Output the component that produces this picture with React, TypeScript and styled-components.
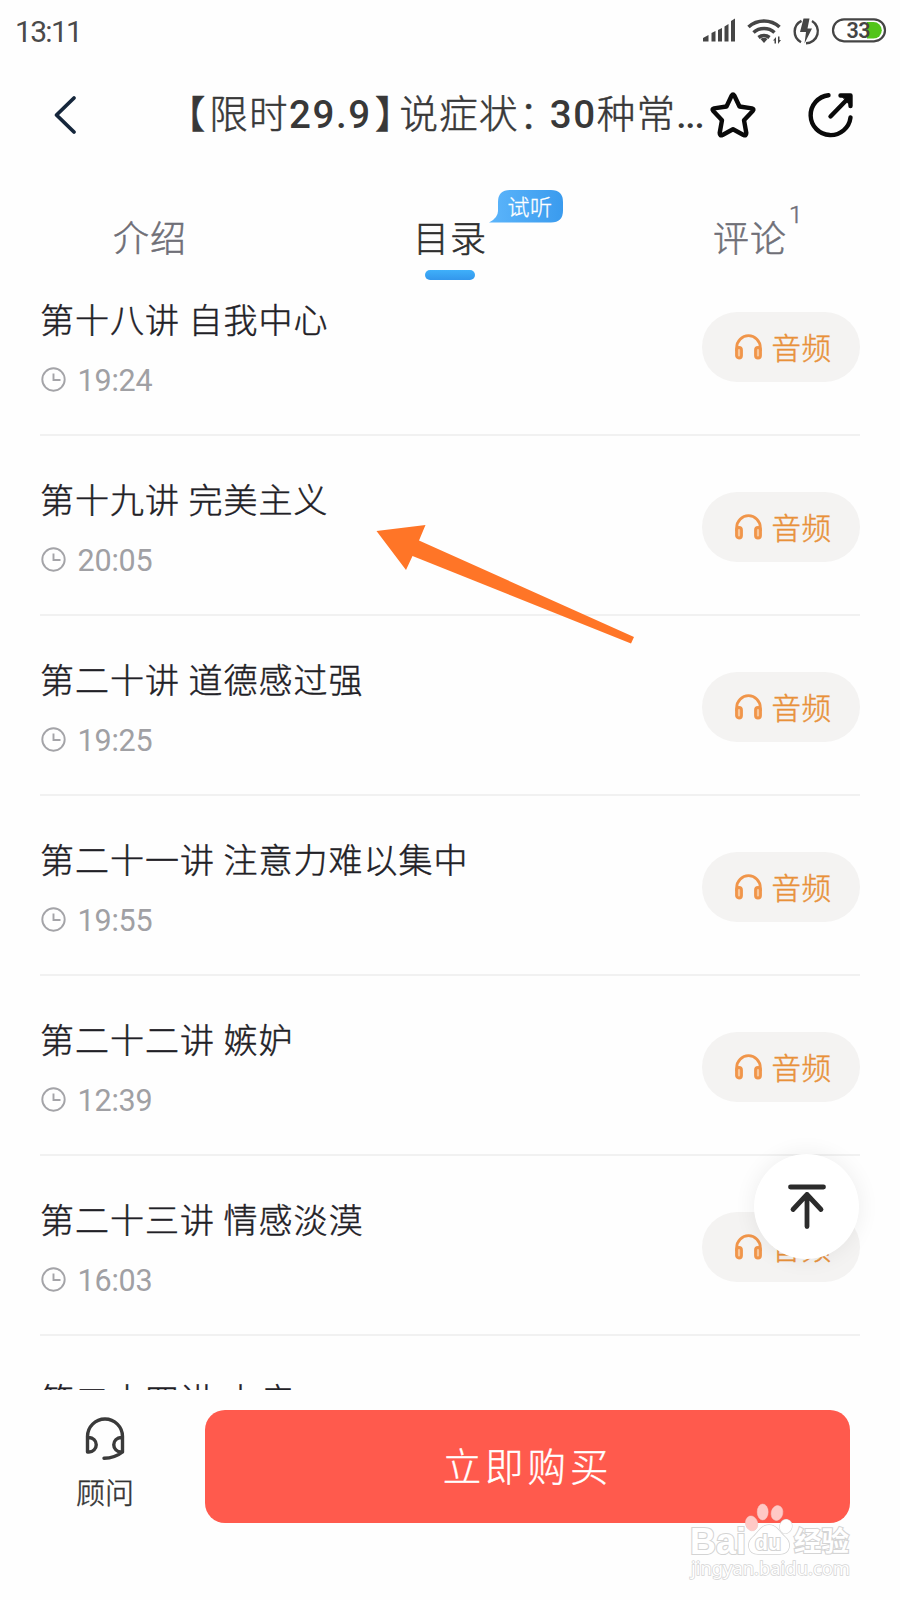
import React from 'react';
import styled, { createGlobalStyle } from 'styled-components';

const cjk = `'Noto Sans CJK SC', sans-serif`;

const GlobalStyle = createGlobalStyle`
  * { box-sizing: border-box; }
  body { margin: 0; background: #fefefe; font-family: Roboto, ${cjk}; }
  svg { display: block; flex: none; }
`;

const Page = styled.div`
  position: relative;
  width: 900px;
  height: 1600px;
  overflow: hidden;
  display: flex;
  flex-direction: column;
  background: #fefefe;
`;

const StatusBar = styled.div`
  height: 60px;
  padding: 1px 13px 0 15px;
  display: flex;
  align-items: center;
  justify-content: space-between;
`;

const Clock = styled.span`
  padding-top: 2px;
  font: 400 30px/1 Roboto, sans-serif;
  letter-spacing: -1.7px;
  color: #4a4a4a;
`;

const NavBar = styled.header`
  height: 110px;
  padding: 0 44px 0 53px;
  display: flex;
  align-items: center;
`;

const NavTitle = styled.h1`
  margin: -8px 0 0 88px;
  width: 542px;
  font: 300 38.5px/60px ${cjk};
  letter-spacing: 1.3px;
  color: #383838;
  white-space: nowrap;
  -webkit-text-stroke: 0.5px;
`;

const Figure = styled.b`
  font: 500 38.5px/1 Roboto, sans-serif;
  letter-spacing: 1.6px;
  -webkit-text-stroke: 0;
`;

const Punctuation = styled.span<{ $lead?: number; $trail: number }>`
  margin-left: ${p => p.$lead ?? 0}px;
  margin-right: ${p => p.$trail}px;
`;

const Ellipsis = styled(Figure)`
  font-size: 37px;
  letter-spacing: -1.2px;
`;

const NavAction = styled.div<{ $gap: number }>`
  margin-left: ${p => p.$gap}px;
`;

const Tabs = styled.nav`
  height: 120px;
  display: grid;
  grid-template-columns: repeat(3, 1fr);
`;

const Tab = styled.div<{ $active?: boolean }>`
  position: relative;
  display: flex;
  flex-direction: column;
  align-items: center;
  padding-top: 40px;
  font: 300 36px/52px ${cjk};
  letter-spacing: 1px;
  color: ${p => (p.$active ? '#2e2e2e' : '#6f6f77')};
  -webkit-text-stroke: 0.5px;
`;

const Indicator = styled.i`
  width: 50px;
  height: 10px;
  margin-top: 8px;
  border-radius: 5px;
  background: linear-gradient(#3fb0fa, #3397ec);
`;

const TrialBadge = styled.span`
  position: absolute;
  left: 189px;
  top: 20px;
  width: 74px;
  height: 33px;
  padding-left: 18.5px;
  font: 300 22px/31px ${cjk};
  letter-spacing: 0.6px;
  color: #fff;
  -webkit-text-stroke: 0.3px;
  svg { position: absolute; left: 0; top: 0; }
  span { position: relative; }
`;

const Count = styled.sup`
  position: absolute;
  left: 189px;
  top: 32px;
  font: 300 24px/26px Roboto, sans-serif;
`;

const List = styled.main`
  height: 1100px;
  padding: 0 40px;
  overflow: hidden;
`;

const Row = styled.div`
  height: 180px;
  padding-top: 37px;
  display: flex;
  justify-content: space-between;
  border-bottom: 2px solid #f1f1f1;
  &:first-child { margin-top: -34px; }
`;

const LessonTitle = styled.div`
  padding-top: 0.5px;
  font: 300 34px/50px ${cjk};
  letter-spacing: 1px;
  color: #1f2126;
  white-space: nowrap;
  -webkit-text-stroke: 0.45px;
`;

const Duration = styled.div`
  display: flex;
  align-items: center;
  gap: 11.5px;
  margin-top: 18.5px;
  height: 36px;
  font: 400 30.5px/36px Roboto, sans-serif;
  letter-spacing: -0.2px;
  color: #a0a0a4;
  span { padding-top: 1px; }
`;

const AudioButton = styled.div`
  width: 158px;
  height: 70px;
  margin-top: 19px;
  padding-left: 32px;
  border-radius: 35px;
  display: flex;
  align-items: center;
  gap: 8.5px;
  background: #f4f3f2;
  font: 300 29.5px/70px ${cjk};
  letter-spacing: 0.6px;
  color: #e8913a;
  -webkit-text-stroke: 0.45px;
  span { margin-top: -2px; }
`;

const Footer = styled.footer`
  height: 210px;
  padding: 20px 50px 0 0;
  display: flex;
  background: #fefefe;
`;

const Advisor = styled.div`
  width: 205px;
  padding-top: 7px;
  padding-left: 5px;
  display: flex;
  flex-direction: column;
  align-items: center;
  font: 300 29px/44px ${cjk};
  color: #333;
  -webkit-text-stroke: 0.45px;
  svg { margin-bottom: 8px; }
`;

const BuyButton = styled.div`
  width: 645px;
  height: 113px;
  border-radius: 20px;
  background: #ff5a4d;
  color: #fff;
  font: 300 38.5px/108px ${cjk};
  letter-spacing: 3.9px;
  text-align: center;
  -webkit-text-stroke: 0.4px;
`;

const BackToTop = styled.div`
  position: absolute;
  left: 754px;
  top: 1154px;
  width: 105px;
  height: 105px;
  border-radius: 50%;
  display: grid;
  place-items: center;
  background: #fff;
  box-shadow: 0 0 22px rgba(0, 0, 0, 0.07);
`;

const Pointer = styled.svg`
  position: absolute;
  left: 370px;
  top: 520px;
`;

const Watermark = styled.svg`
  position: absolute;
  left: 680px;
  top: 1500px;
`;

const lessons = [
  ['第十八讲 自我中心', '19:24'],
  ['第十九讲 完美主义', '20:05'],
  ['第二十讲 道德感过强', '19:25'],
  ['第二十一讲 注意力难以集中', '19:55'],
  ['第二十二讲 嫉妒', '12:39'],
  ['第二十三讲 情感淡漠', '16:03'],
  ['第二十四讲 内疚', '15:20'],
];

const StatusIcons = () => (
  <svg width="190" height="34" viewBox="697 13.500 190 34" fill="#454545">
    <path d="M703 41v-3.500l5.500-3V41zM711.500 41v-8.500l4-2V41zM718 41V29.500l4-2V41zM724.500 41V26l4-2.500V41zM731 41V20.500l4-2.500V41z" />
    <g fill="none" stroke="#454545" strokeWidth="3.600">
      <path d="M748.500 26.500a23 23 0 0 1 31 0M753.500 32a16 16 0 0 1 21 0M758.500 37a9 9 0 0 1 11 0" />
    </g>
    <path d="M760.500 38.500q3.500-2.500 7 0l-3.500 4zM773 40l3-3.500V43h-1.500v-3zM778 36h1.500v3.500h1.500l-3 4z" />
    <g fill="none" stroke="#454545" strokeWidth="2.400">
      <path d="M801.500 20.300A12 12 0 0 0 801 41.700M812 20.500A12 12 0 0 1 806 42.800" />
    </g>
    <path d="M803.500 18h6l-2 10h4.500l-7.500 15 1.500-11.500h-6z" />
    <rect x="833" y="18.800" width="52" height="22" rx="11" fill="#fff" stroke="#454545" strokeWidth="2.200" />
    <path d="M867 21.500h6.500a8.300 8.300 0 0 1 0 16.600H867z" fill="#52c41a" />
    <text x="846.500" y="37.200" fontFamily="Roboto, sans-serif" fontSize="21.500" fontWeight="600" textLength="24">33</text>
  </svg>
);

const BackIcon = () => (
  <svg width="26" height="40" viewBox="0 0 26 40" fill="none" stroke="#15263b" strokeWidth="3.800" strokeLinecap="round" strokeLinejoin="round">
    <path d="M21 3L3.500 20 21 37" />
  </svg>
);

const StarIcon = () => (
  <svg width="48" height="48" viewBox="0 0 48 48" fill="none" stroke="#0a0a0a" strokeWidth="4.400" strokeLinejoin="round">
    <path d="M22.700 4.500Q24 2.300 25.300 4.500L30.500 15.500 43 17.400Q45.500 18 43.700 20L35 29.200 37.300 42Q37.300 45.200 34.500 44L24 38.300 13.500 44Q10.700 45.200 10.700 42L13 29.200 4.300 20Q2.500 18 5 17.400L17.500 15.500z" />
  </svg>
);

const ShareIcon = () => (
  <svg width="46" height="48" viewBox="0 0 46 48" fill="none" stroke="#0a0a0a" strokeWidth="4.400" strokeLinecap="round" strokeLinejoin="round">
    <path d="M20.500 4.200A20 20 0 1 0 42.500 26.500M22.500 25.500L41 6.500M32.500 4.500H42.500V15" />
    <path d="M34 5h8v9z" fill="#0a0a0a" strokeWidth="1" />
  </svg>
);

const ClockIcon = () => (
  <svg width="26" height="26" viewBox="0 0 26 26" fill="none" stroke="#a4a4a8" strokeWidth="1.900">
    <circle cx="13.500" cy="12.500" r="11.200" />
    <path d="M13.500 6.500v6.500h7" />
  </svg>
);

const HeadphonesIcon = () => (
  <svg width="29" height="28" viewBox="0 0 29 28" fill="none" stroke="#f0954a" strokeWidth="2.800">
    <path d="M2.700 18V14.500a11.800 11.800 0 0 1 23.600 0V18" />
    <rect x="2.500" y="14.500" width="5" height="10.500" rx="2.500" fill="#f8c79c" />
    <rect x="21.500" y="14.500" width="5" height="10.500" rx="2.500" fill="#f8c79c" />
  </svg>
);

const HeadsetIcon = () => (
  <svg width="42" height="44" viewBox="0 0 42 44" fill="none" stroke="#3a3a3a" strokeWidth="3.400" strokeLinecap="round" strokeLinejoin="round">
    <path d="M3.500 35V19.500a17.500 17.500 0 0 1 35 0V35M3.500 20.500h1.500a7.200 7.200 0 0 1 0 14.500H3.500M38.500 20.500H37a7.200 7.200 0 0 0 0 14.500h1.500Q31 41 20 41.300" />
  </svg>
);

export default function App() {
  return (
    <Page>
      <GlobalStyle />
      <StatusBar>
        <Clock>13:11</Clock>
        <StatusIcons />
      </StatusBar>
      <NavBar>
        <BackIcon />
        <NavTitle>
          <Punctuation $trail={2.5}>【</Punctuation>限时<Figure>29.9</Figure>
          <Punctuation $lead={3} $trail={-15}>】</Punctuation>说症状
          <Punctuation $trail={-9}>：</Punctuation>
          <Figure>30</Figure>种常<Ellipsis>...</Ellipsis>
        </NavTitle>
        <NavAction $gap={0}><StarIcon /></NavAction>
        <NavAction $gap={51}><ShareIcon /></NavAction>
      </NavBar>
      <Tabs>
        <Tab>介绍</Tab>
        <Tab $active>
          目录
          <Indicator />
          <TrialBadge>
            <svg width="74" height="33" viewBox="0 0 74 33">
              <defs>
                <linearGradient id="badge">
                  <stop offset="0" stopColor="#5cb5fb" />
                  <stop offset="1" stopColor="#3a9bee" />
                </linearGradient>
              </defs>
              <path d="M0 32.500Q9 28 9 21V12Q9 0 21 0H62Q74 0 74 12V20.500Q74 32.500 62 32.500z" fill="url(#badge)" />
            </svg>
            <span>试听</span>
          </TrialBadge>
        </Tab>
        <Tab>
          评论
          <Count>1</Count>
        </Tab>
      </Tabs>
      <List>
        {lessons.map(([title, time]) => (
          <Row key={title}>
            <div>
              <LessonTitle>{title}</LessonTitle>
              <Duration><ClockIcon /><span>{time}</span></Duration>
            </div>
            <AudioButton><HeadphonesIcon /><span>音频</span></AudioButton>
          </Row>
        ))}
      </List>
      <Footer>
        <Advisor><HeadsetIcon />顾问</Advisor>
        <BuyButton>立即购买</BuyButton>
      </Footer>
      <BackToTop>
        <svg width="40" height="48" viewBox="0 0 40 48" fill="none" stroke="#2b2b2b" strokeWidth="4.800" strokeLinecap="round" strokeLinejoin="round">
          <path d="M3.500 4H36.500M20 43.500V11.500M6 26.500L20 11.500 34 26.500" />
        </svg>
      </BackToTop>
      <Pointer width="270" height="130" viewBox="370 520 270 130">
        <path d="M376.500 531L425.500 525 419 540.500 634 637 631 643.500 412.500 556 406 570z" fill="#ff7527" />
      </Pointer>
      <Watermark width="180" height="90" viewBox="680 1500 180 90" fill="#fff" stroke="#d4d4d4" strokeWidth="2.200" paintOrder="stroke">
        <path d="M769 1525c-8 0-10 7-16 12-7 6-5 17 5 17h22c10 0 12-11 5-17-6-5-8-12-16-12z" strokeWidth="1.400" />
        <g fontFamily="'Liberation Sans', sans-serif" fontWeight="700">
          <text x="690" y="1553.500" fontSize="37" textLength="56" lengthAdjust="spacingAndGlyphs">Bai</text>
          <text x="755" y="1550" fontSize="22" textLength="26" lengthAdjust="spacingAndGlyphs">du</text>
        </g>
        <text x="794" y="1551" fontSize="27.500" fontWeight="700" fontFamily={cjk} textLength="55" lengthAdjust="spacingAndGlyphs">经验</text>
        <text x="691" y="1574.500" fontSize="18.500" fontFamily="'Noto Sans', sans-serif" strokeWidth="1.500" textLength="159" lengthAdjust="spacingAndGlyphs">jingyan.baidu.com</text>
        <g fill="#ffc9c6" stroke="#e6b5b2" strokeWidth="0.600">
          <ellipse cx="762.700" cy="1512" rx="5.500" ry="8" />
          <ellipse cx="777" cy="1513" rx="5.800" ry="7.500" transform="rotate(14 777 1513)" />
          <ellipse cx="751.500" cy="1523.500" rx="6" ry="7.500" transform="rotate(-15 751 1523)" />
          <ellipse cx="786" cy="1526.500" rx="6" ry="7" fill="#fff" stroke="#d9d9d9" strokeWidth="1.200" transform="rotate(15 786 1526)" />
        </g>
      </Watermark>
    </Page>
  );
}
